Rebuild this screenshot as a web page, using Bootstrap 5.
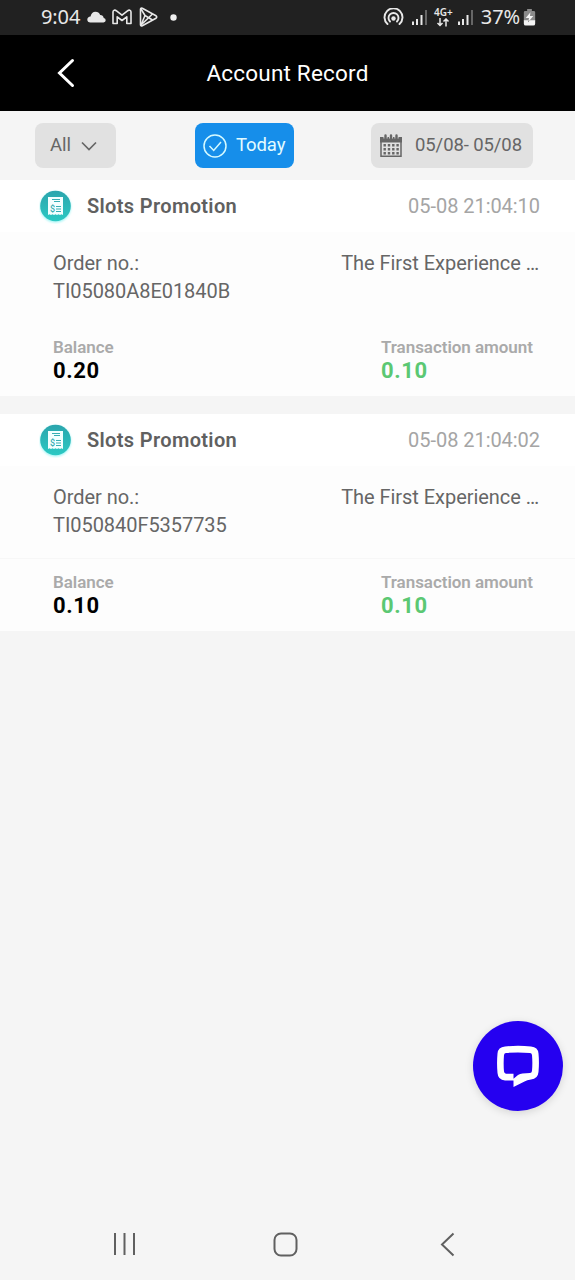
<!DOCTYPE html>
<html lang="en">
<head>
<meta charset="utf-8">
<meta name="viewport" content="width=device-width, initial-scale=1">
<title>Account Record</title>
<link href="https://cdn.jsdelivr.net/npm/bootstrap@5.3.0/dist/css/bootstrap.min.css" rel="stylesheet">
<style>
body{font-family:Roboto,"Liberation Sans",sans-serif;background:#f5f5f5;color:#666;font-size:20px;line-height:28px;min-height:1280px}
svg{display:block;flex:none}
.status-bar{height:35px;background:#212121;color:#e8e8e8;padding:0 39px 1px 41px;font-size:20px;font-family:"Noto Sans",sans-serif}
.status-bar .clock,.status-bar .charge{letter-spacing:-.1px}
.title-bar{height:76px;background:#000;color:#fff;font-size:22.500px;letter-spacing:.2px;padding:0 57px 1px}
.title-bar .side{width:18px}
.filters{height:69px;padding:0 42px 1px 35px}
.chip{height:45px;border:0;border-radius:8px;background:#e1e1e1;color:#666;font-size:18.500px;padding:1px 0 0 15px;line-height:45px}
.chip span{letter-spacing:-.1px}
.chip-all{width:81px}
.chip-today{width:99px;background:#168eea;color:#e2fbff;padding-left:8px;margin-left:2px}
.chip-date{width:162px;padding-left:9px}
.record{height:216px;background:#fdfdfd;margin-bottom:18px}
.record-head{height:52px;background:#fff;padding:0 35px 0 39px}
.record-title{font-weight:600;color:#606060;letter-spacing:.35px}
.record-time{color:#a5a5a5;letter-spacing:-.05px}
.order{height:92px;padding:17px 36px 0 53px;letter-spacing:-.05px}
.amounts{height:72px;padding:14px 42px 0 53px}
.record+.record{height:217px}
.record+.record .order{height:93px;border-bottom:1px solid #f7f7f7}
.amount-label{font-size:17px;line-height:18px;font-weight:600;color:#aaa;letter-spacing:-.05px}
.amount-value{font-size:22px;line-height:30px;font-weight:700;color:#000;letter-spacing:.6px}
.amount-col{width:152px}
.gain{color:#5bc873}
.net{font-size:10px;line-height:11px;font-weight:600;margin-left:6px}
.chat{right:12px;top:1021px;width:90px;height:90px;background:#2500f0;box-shadow:0 2px 8px #0002}
.sys-nav{height:72px;padding:0 120px 0 113px}
</style>
</head>
<body class="d-flex flex-column position-relative">
<div class="status-bar d-flex align-items-center justify-content-between">
  <div class="d-flex align-items-center">
    <span class="clock">9:04</span>
    <svg style="margin-left:7px" width="19" height="12" viewBox="0 0 19 12"><path fill="#e8e8e8" d="M3.500 11.500Q.3 11.300.3 8.500q.2-2.600 3.200-3Q4.500.8 8.500.8q3.300 0 4.700 3.200 3 .2 3.500 3 2 .4 2 2.300 0 2-2.200 2.200z"/></svg>
    <svg style="margin-left:6px" width="20" height="16" viewBox="0 0 20 16"><path fill="none" stroke="#e8e8e8" stroke-width="1.600" stroke-linejoin="round" d="M1 14.500V3C1 1 3 .6 4.500 1.800L10 6.200l5.500-4.400C17 .6 19 1 19 3v11.500h-4.200V7.800L10 11.500 5.200 7.800v6.700z"/></svg>
    <svg style="margin-left:7px" width="19" height="20" viewBox="0 0 19 20"><g fill="none" stroke="#e8e8e8" stroke-width="1.600" stroke-linejoin="round"><path d="M1.500 2.200v15.600q.3 1.500 1.800.9L17 11.200q1.400-1.200 0-2.400L3.300 1.300Q1.800.7 1.500 2.200z"/><path d="M2 18L13.500 7M2 2l4 6.500L13.500 13M2 18l4-9.500"/></g></svg>
    <svg style="margin-left:12px" width="7" height="7"><circle cx="3.500" cy="3.500" r="3.200" fill="#eee"/></svg>
  </div>
  <div class="d-flex align-items-center">
    <svg width="21" height="18" viewBox="0 0 21 18"><g fill="none" stroke="#e8e8e8" stroke-width="1.900" stroke-linecap="round"><path d="M4.500 16a9 9 0 1 1 12 0M7 13.500a5 5 0 1 1 7 0"/></g><circle cx="10.500" cy="10.500" r="2.200" fill="#e8e8e8"/></svg>
    <svg style="margin-left:8px" width="16" height="16" viewBox="0 0 16 16"><path fill="#e8e8e8" d="M0 12.500h2V16H0zM4 10h2v6H4zM8.500 6h2v10h-2z"/><path fill="#666" d="M13 1h2v15h-2z"/></svg>
    <div class="net d-flex flex-column align-items-center"><span>4G+</span><svg width="19" height="9" viewBox="0 0 19 9"><path fill="none" stroke="#e8e8e8" stroke-width="1.500" d="M6 0v7.500M3.500 5L6 7.500 8.500 5M12 8.500V1M9.500 3.500L12 1l2.500 2.500"/></svg></div>
    <svg style="margin-left:5px" width="16" height="16" viewBox="0 0 16 16"><path fill="#e8e8e8" d="M0 12.500h2V16H0zM4 10h2v6H4zM8.500 6h2v10h-2z"/><path fill="#666" d="M13 1h2v15h-2z"/></svg>
    <span class="charge" style="margin-left:7px">37%</span>
    <svg style="margin-left:3px" width="13" height="17" viewBox="0 0 13 18"><path fill="#8b8b8b" d="M4 0h5v2h2q1.500 0 1.500 1.500V13H.5V3.500Q.5 2 2 2h2z"/><path fill="#f4f4f4" d="M.5 12h12v3.500q0 2-2 2h-8q-2 0-2-2zM7.500 3.500l-5 6H6L5 14l5.500-6.500H7z"/></svg>
  </div>
</div>
<header class="title-bar d-flex align-items-center justify-content-between">
  <svg class="side" width="18" height="30" viewBox="0 0 18 30"><path d="M15.500 2.500L2.500 15l13 12.500" fill="none" stroke="#fff" stroke-width="3" stroke-linecap="round"/></svg>
  <span class="page-title">Account Record</span><span class="side"></span>
</header>
<div class="filters d-flex align-items-center justify-content-between">
  <button class="chip chip-all d-flex align-items-center">All<svg style="margin-left:10px" width="16" height="10" viewBox="0 0 16 10"><path d="M1 1.500l7 7 7-7" fill="none" stroke="#666" stroke-width="1.700"/></svg></button>
  <button class="chip chip-today d-flex align-items-center"><svg width="24" height="24" viewBox="0 0 24 24"><g fill="none" stroke="#d5faff" stroke-width="1.500"><circle cx="12" cy="12" r="11"/><path d="M6.500 12l4.200 4.500L18 8"/></g></svg><span style="margin-left:9px">Today</span></button>
  <button class="chip chip-date d-flex align-items-center"><svg width="22" height="24" viewBox="0 0 22 24"><path fill="none" stroke="#666" stroke-width="1.500" d="M1 5v17.200h20V5"/><path fill="#666" d="M0 3h22v5.500H0z"/><path stroke="#e1e1e1" stroke-width="4" d="M5.500 1v3.500M11 1v3.500M16.500 1v3.500"/><path stroke="#666" stroke-width="2.400" stroke-linecap="round" d="M5.500 1.500v3M11 1.500v3M16.500 1.500v3"/><path stroke="#666" stroke-width="2.400" stroke-dasharray="2.400 1.900" d="M3.500 11.200h15.400M3.500 15.200h15.400M3.500 19.200h15.400"/></svg><span style="margin-left:13px">05/08- 05/08</span></button>
</div>
<main>
  <article class="record">
    <div class="record-head d-flex align-items-center">
      <svg width="34" height="36" viewBox="0 0 34 36"><use href="#receipt"/></svg>
      <span class="record-title" style="margin-left:14px">Slots Promotion</span><span class="record-time ms-auto">05-08 21:04:10</span>
    </div>
    <div class="order d-flex justify-content-between"><div>Order no.:<br>TI05080A8E01840B</div><div>The First Experience …</div></div>
    <div class="amounts d-flex justify-content-between">
      <div><div class="amount-label">Balance</div><div class="amount-value">0.20</div></div>
      <div class="amount-col"><div class="amount-label text-nowrap">Transaction amount</div><div class="amount-value gain">0.10</div></div>
    </div>
  </article>
  <article class="record">
    <div class="record-head d-flex align-items-center">
      <svg width="34" height="36" viewBox="0 0 34 36"><defs><linearGradient id="teal" x2="0" y2="1"><stop stop-color="#2ba5ad"/><stop offset="1" stop-color="#2bc9c3"/></linearGradient><filter id="glow" x="-20%" y="-20%" width="140%" height="140%"><feGaussianBlur stdDeviation="1.300"/></filter>
      <g id="receipt"><circle cx="16.500" cy="19" r="15.500" fill="#a4f5f5" filter="url(#glow)"/><circle cx="16.500" cy="18" r="15.300" fill="url(#teal)"/><path fill="#f3ffff" d="M9 9h15v18l-1.500-.8-1.500.8-1.500-.8-1.500.8-1.500-.8-1.500.8-1.500-.8-1.500.8-1.500-.8L9 27z"/><path fill="none" stroke="#37aeb3" d="M13 11.500h8M15 13.500h6M17 18.500h5M17 21h5M17 23.500h5"/><text x="11" y="24" font-size="9" font-weight="500" fill="#37aeb3">$</text></g></defs><use href="#receipt"/></svg>
      <span class="record-title" style="margin-left:14px">Slots Promotion</span><span class="record-time ms-auto">05-08 21:04:02</span>
    </div>
    <div class="order d-flex justify-content-between"><div>Order no.:<br>TI050840F5357735</div><div>The First Experience …</div></div>
    <div class="amounts d-flex justify-content-between">
      <div><div class="amount-label">Balance</div><div class="amount-value">0.10</div></div>
      <div class="amount-col"><div class="amount-label text-nowrap">Transaction amount</div><div class="amount-value gain">0.10</div></div>
    </div>
  </article>
</main>
<button class="chat btn p-0 border-0 rounded-circle position-absolute d-flex align-items-center justify-content-center" aria-label="Chat"><svg width="42" height="42" viewBox="0 0 42 42"><path fill="#fff" fill-rule="evenodd" d="M8 1.500Q21 0 34 1.500q7 .7 7.500 7 .9 9 0 18.500-.7 7-7.500 7.500-4 .5-6.500 2L16.500 42v-6.500H8Q1 35 .5 28q-.9-10 0-19.500Q1 2.200 8 1.500zM9 8q-1.700.2-2 2-.7 8.500 0 16.500.3 2 2 2.200h7.500v5L21 30q2-1.500 4.500-1.600l7.500-.4q1.700-.2 2-2 .7-8 0-16-.3-1.800-2-2-12-1-24 0z"/></svg></button>
<footer class="sys-nav d-flex align-items-center mt-auto">
  <svg width="24" height="24" viewBox="0 0 24 24"><path stroke="#606060" stroke-width="2" d="M2 1v22M11.500 1v22M21 1v22"/></svg>
  <svg style="margin-left:136px" width="25" height="25" viewBox="0 0 25 25"><rect x="1.500" y="1.500" width="22" height="22" rx="6.500" fill="none" stroke="#606060" stroke-width="2"/></svg>
  <svg class="ms-auto" width="15" height="25" viewBox="0 0 15 25"><path d="M13.500 1.500l-11.500 11 11.500 11" fill="none" stroke="#606060" stroke-width="2"/></svg>
</footer>
<script src="https://cdn.jsdelivr.net/npm/bootstrap@5.3.0/dist/js/bootstrap.bundle.min.js"></script>
</body>
</html>
